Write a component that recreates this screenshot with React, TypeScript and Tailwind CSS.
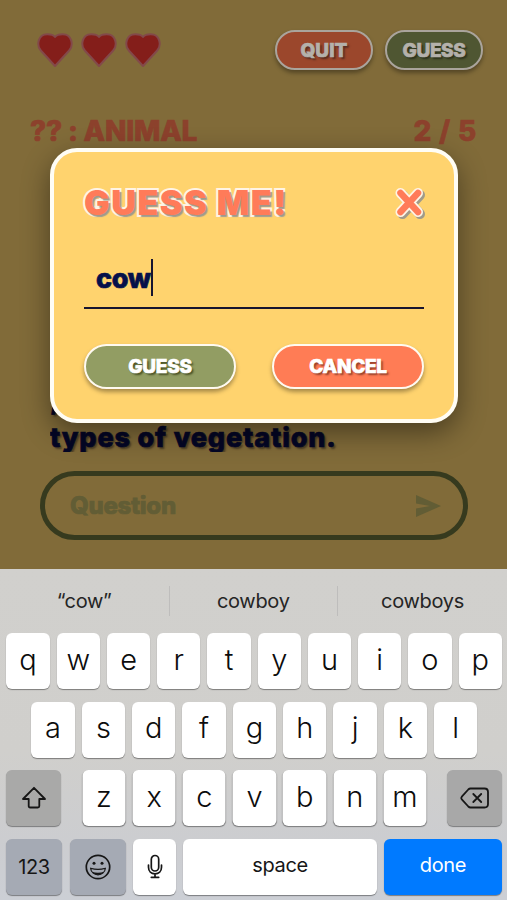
import type { ReactNode } from "react";
import { clsx } from "clsx";

const display =
  "font-['Inter','Liberation_Sans',sans-serif] font-extrabold whitespace-nowrap [-webkit-text-stroke:0.7px_currentColor] [stroke-linejoin:round]";

function Heart() {
  return (
    <svg width="36" height="35" viewBox="0 0 36 35">
      <path
        d="M18 33 L3.8 17.5 C-.8 12.3 1 1.2 10.3 1.2 C14.2 1.2 16.8 2.4 18 4 C19.2 2.4 21.8 1.2 25.7 1.2 C35 1.2 36.8 12.3 32.2 17.5 Z"
        fill="#841e1a"
        stroke="#83494a"
        strokeWidth="2"
        strokeLinejoin="round"
      />
    </svg>
  );
}

function PillButton({ className, children }: { className: string; children: ReactNode }) {
  return (
    <button
      className={clsx(
        "flex items-center justify-center rounded-full shadow-[0_3px_4px_rgba(0,0,0,0.35)]",
        display,
        className
      )}
    >
      {children}
    </button>
  );
}

function Key({ className, children }: { className?: string; children: ReactNode }) {
  return (
    <button
      className={clsx(
        "flex h-14 items-center justify-center rounded-[6px] shadow-[0_1px_1px_rgba(0,0,0,0.4)]",
        className
      )}
    >
      {children}
    </button>
  );
}

function LetterKey({ letter }: { letter: string }) {
  return (
    <Key className="w-[43.4px] bg-white pb-[3px] text-[29px] font-[350] text-[#0c0c0c]">
      {letter}
    </Key>
  );
}

function ShiftIcon() {
  return (
    <svg width="26" height="24" viewBox="0 0 26 24" fill="none" stroke="#161616" strokeWidth="1.8" strokeLinejoin="round">
      <path d="M13 1.8 L24 13 H18.3 V20 Q18.3 21.5 16.8 21.5 H9.2 Q7.7 21.5 7.7 20 V13 H2 Z" />
    </svg>
  );
}

function DeleteIcon() {
  return (
    <svg width="30" height="22" viewBox="0 0 30 22" fill="none" stroke="#161616" strokeWidth="1.8" strokeLinejoin="round" strokeLinecap="round">
      <path d="M10.5 1.5 H24.5 Q28 1.5 28 5 V17 Q28 20.5 24.5 20.5 H10.5 Q9.3 20.5 8.3 19.5 L1.8 12.3 Q.8 11 1.8 9.7 L8.3 2.5 Q9.3 1.5 10.5 1.5 Z" />
      <path d="M13.3 7 L21.2 15 M21.2 7 L13.3 15" />
    </svg>
  );
}

function SmileIcon() {
  return (
    <svg width="26" height="26" viewBox="0 0 26 26" fill="none" stroke="#161616" strokeWidth="1.7">
      <circle cx="13" cy="13" r="11.7" />
      <circle cx="9" cy="9.2" r="1.5" fill="#161616" stroke="none" />
      <circle cx="17" cy="9.2" r="1.5" fill="#161616" stroke="none" />
      <path d="M5.6 14.2 Q13 16.5 20.4 14.2 C19.5 23 6.5 23 5.6 14.2 Z" strokeWidth="1.2" strokeLinejoin="round" />
      <path d="M6.6 17.4 Q13 20 19.4 17.4 Q17 20.8 13 20.8 Q9 20.8 6.6 17.4 Z" fill="#161616" stroke="none" />
    </svg>
  );
}

function MicIcon() {
  return (
    <svg width="16" height="25" viewBox="0 0 16 25" fill="none" stroke="#161616" strokeWidth="1.7" strokeLinecap="round">
      <rect x="4.3" y="1.5" width="7.4" height="15.5" rx="3.7" />
      <path d="M1.5 11 V13.3 C1.5 17.3 4.3 19.8 8 19.8 C11.7 19.8 14.5 17.3 14.5 13.3 V11 M8 20 V23.3 M4.3 23.3 H11.7" />
    </svg>
  );
}

function Keyboard() {
  return (
    <div className="h-[331px] bg-[linear-gradient(#d1d0cd_0%,#d0cfcc_55%,#cccdd0_82%,#cccfd5_100%)] font-['Inter','Liberation_Sans',sans-serif]">
      <div className="flex h-16 items-center text-[20px] tracking-[-0.3px] text-[#252525]">
        <span className="w-[169.5px] border-r border-[#bebdbc] text-center leading-[30px]">“cow”</span>
        <span className="w-[168.5px] border-r border-[#bebdbc] text-center leading-[30px]">cowboy</span>
        <span className="w-[169px] text-center leading-[30px]">cowboys</span>
      </div>
      <div className="flex flex-col gap-[12.5px] pr-[5px] pl-[6px]">
        <div className="flex justify-between pl-[0.4px]">
          {[..."qwertyuiop"].map((l) => <LetterKey key={l} letter={l} />)}
        </div>
        <div className="flex justify-between pr-[24.5px] pl-[25.4px]">
          {[..."asdfghjkl"].map((l) => <LetterKey key={l} letter={l} />)}
        </div>
        <div className="flex justify-between">
          <Key className="w-[55px] bg-[#a9a9a8]"><ShiftIcon /></Key>
          <div className="flex w-[344.6px] translate-x-[0.5px] justify-between">
            {[..."zxcvbnm"].map((l) => <LetterKey key={l} letter={l} />)}
          </div>
          <Key className="w-[55px] bg-[#a8a8a8]"><DeleteIcon /></Key>
        </div>
        <div className="flex text-[20px] tracking-[-0.35px] text-[#161616]">
          <Key className="mr-2 w-14 bg-[#a5aab4]">123</Key>
          <Key className="mr-[7px] w-14 bg-[#a5aab4]"><SmileIcon /></Key>
          <Key className="mr-[7px] w-[43px] bg-white"><MicIcon /></Key>
          <Key className="mr-[7px] w-[194px] bg-white pb-1">space</Key>
          <Key className="flex-1 bg-[#007aff] pb-1 text-white">done</Key>
        </div>
      </div>
    </div>
  );
}

function GuessModal() {
  return (
    <div className="absolute top-[148px] left-[50px] h-[275px] w-[408px] rounded-[27px] border-4 border-[#fffdf5] bg-[#ffd36e] px-[30px] shadow-[0_10px_28px_rgba(0,0,0,0.42)]">
      <div className="flex h-[76px] items-end justify-between">
        <h2 className="font-['Inter','Liberation_Sans',sans-serif] text-[34px] leading-[50px] font-black tracking-[1.6px] whitespace-nowrap text-[#ff7b59] [-webkit-text-stroke:4px_#fff4e4] [paint-order:stroke_fill] [stroke-linejoin:round] [text-shadow:2px_2px_1px_#a09a8a]">
          GUESS ME!
        </h2>
        <svg className="mb-2 overflow-visible drop-shadow-[2px_2px_0.5px_#a09a8a]" width="30" height="32" viewBox="0 0 30 32" fill="none" strokeLinecap="round">
          <path d="M6.5 5 L24 24 M24 5 L6.5 24" stroke="#fff4e4" strokeWidth="10" />
          <path d="M6.5 5 L24 24 M24 5 L6.5 24" stroke="#ff7b59" strokeWidth="6.5" />
        </svg>
      </div>
      <div className="mt-6 flex h-[57px] items-center border-b-2 border-[#17142f] pb-1 pl-3">
        <span className={clsx(display, "pt-[3px] text-[27px] tracking-[-0.3px] text-[#05104a]")}>cow</span>
        <span className="h-[37px] w-[2px] bg-[#17142f]" />
      </div>
      <div className="mt-[35px] flex justify-between">
        <PillButton className="h-[45px] w-[152px] border-[2.5px] border-[#fffaf0] bg-[#929d63] pt-0.5 text-[19px] tracking-[-0.3px] text-white [text-shadow:2px_2px_2px_#485125]">
          GUESS
        </PillButton>
        <PillButton className="h-[45px] w-[152px] border-[2.5px] border-[#fffaf0] bg-[#ff7c55] pt-0.5 text-[19px] tracking-[-0.3px] text-white [text-shadow:2px_2px_2px_#943f29]">
          CANCEL
        </PillButton>
      </div>
    </div>
  );
}

export default function App() {
  return (
    <div className="relative h-[900px] w-[507px] overflow-hidden bg-[#816b39]">
      <div className="flex h-[569px] flex-col">
        <header className="flex items-start justify-between pt-[30px] pr-6 pl-[37px]">
          <div className="flex gap-2 pt-[3px]">
            <Heart />
            <Heart />
            <Heart />
          </div>
          <div className="flex gap-3">
            <PillButton className="h-10 w-[98px] border-2 border-[#aaa49c] bg-[#9b472c] pt-0.5 text-[19px] text-[#b4b1ab] [text-shadow:2px_2px_2px_#552b20]">
              QUIT
            </PillButton>
            <PillButton className="h-10 w-[98px] border-2 border-[#aaa49c] bg-[#4f5632] pt-0.5 text-[19px] tracking-[-0.4px] text-[#b4b1ab] [text-shadow:2px_2px_2px_#2b301b]">
              GUESS
            </PillButton>
          </div>
        </header>
        <div className={clsx(display, "mt-[43px] flex justify-between pr-[30px] pl-[30px] text-[28px] leading-9 text-[#8c412c]")}>
          <span className="tracking-[-0.2px]">?? : ANIMAL</span>
          <span className="tracking-[0.8px]">2 / 5</span>
        </div>
        <div className={clsx(display, "mt-[232px] ml-[50px] flex h-[71px] flex-col text-[27px] leading-[38px] tracking-[0.85px] text-[#040625] [text-shadow:2px_2px_2px_#4b3d26] overflow-hidden")}>
          <span>,</span>
          <span>types of vegetation.</span>
        </div>
        <div className="mr-[39px] ml-10 mt-[19px] flex h-[69px] items-center justify-between rounded-full border-[5px] border-[#363a1e] pr-[22px] pl-[25px]">
          <span className={clsx(display, "text-[24px] tracking-[-0.3px] text-[#625d35]")}>Question</span>
          <svg width="25" height="22" viewBox="0 0 25 22" fill="#625d35">
            <path d="M0 0 L25 11 L0 22 V13.6 L14 11 L0 8.4 Z" />
          </svg>
        </div>
      </div>
      <Keyboard />
      <GuessModal />
    </div>
  );
}
